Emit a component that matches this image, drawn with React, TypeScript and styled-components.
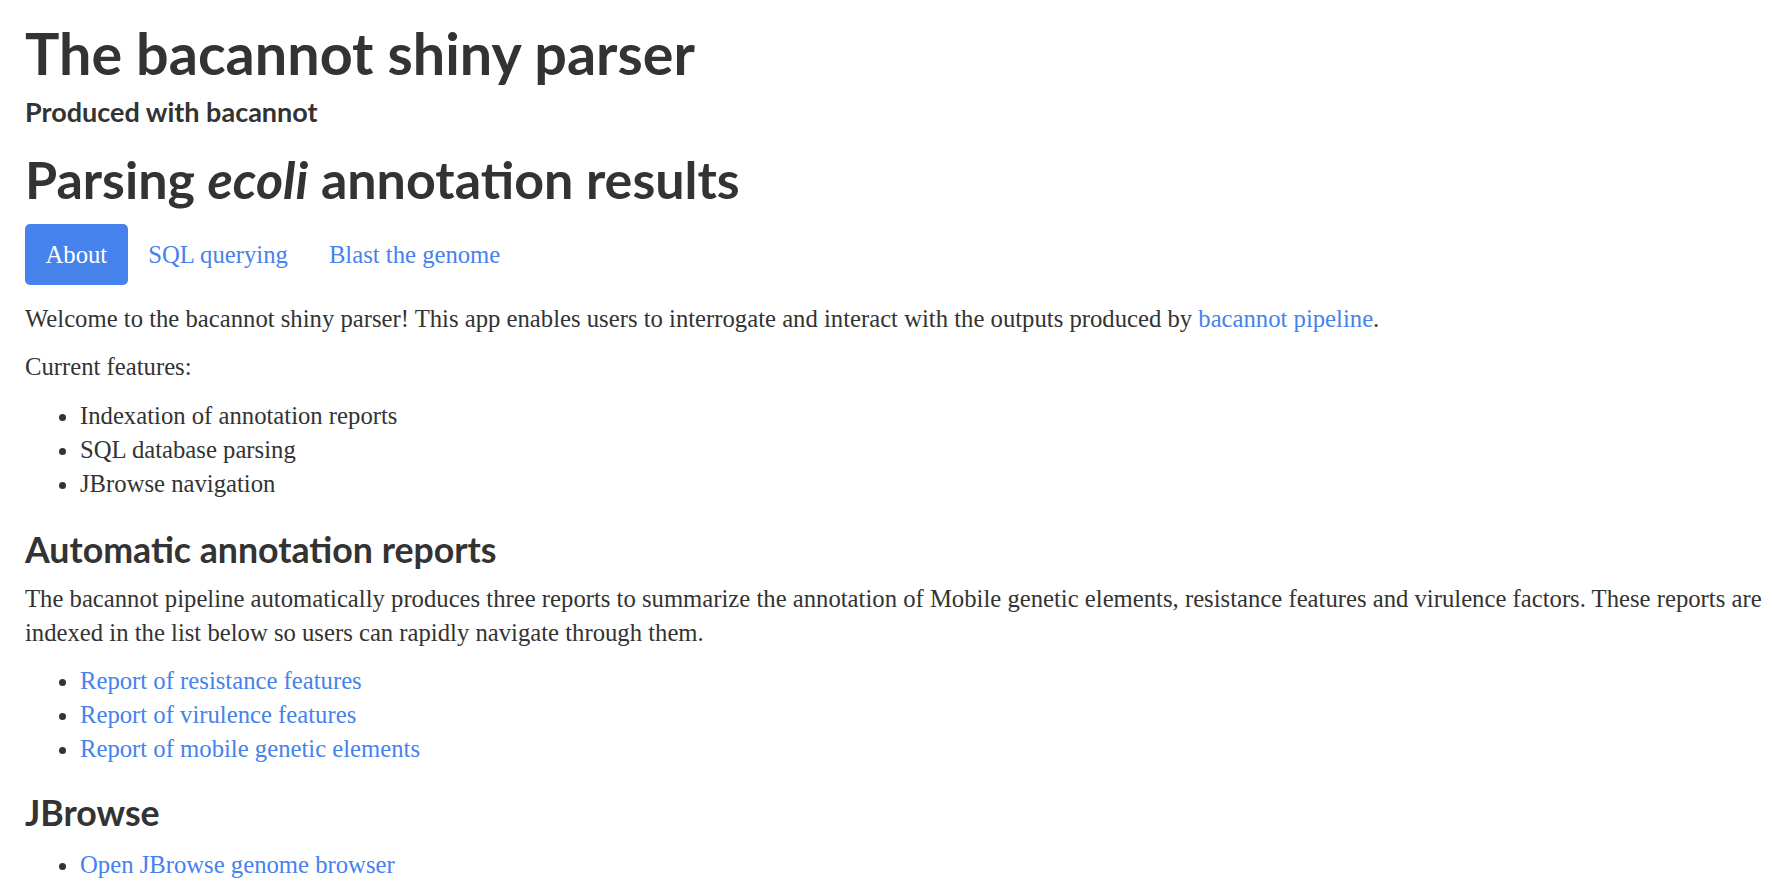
import styled, { createGlobalStyle } from 'styled-components';

const GlobalStyle = createGlobalStyle`
  html, body {
    margin: 0;
    padding: 0;
    background: #ffffff;
  }
  body {
    font-family: "Liberation Serif", Georgia, serif;
    font-size: 24.7px;
    line-height: 34px;
    color: #333333;
  }
`;

const Page = styled.div`
  padding: 18px 2px 20px 25px;
`;

const Heading = styled.h1<{ $size: number; $top?: number; $bottom?: number }>`
  font-family: Lato, "Liberation Sans", sans-serif;
  font-weight: 700;
  font-size: ${(p) => p.$size}px;
  line-height: 1.2;
  color: #333333;
  margin: ${(p) => p.$top ?? 0}px 0 ${(p) => p.$bottom ?? 0}px;

  em {
    font-style: italic;
  }
`;

const Pills = styled.nav`
  display: flex;
  align-items: center;
  margin: 13px 0 17px;
`;

const Pill = styled.a<{ $active?: boolean }>`
  display: block;
  padding: 13px 20.5px;
  border-radius: 5px;
  line-height: 35px;
  text-decoration: none;
  color: ${(p) => (p.$active ? '#ffffff' : '#4582ec')};
  background: ${(p) => (p.$active ? '#4582ec' : 'transparent')};
  cursor: pointer;
`;

const Paragraph = styled.p<{ $bottom?: number }>`
  margin: 0 0 ${(p) => p.$bottom ?? 14}px;
`;

const List = styled.ul`
  margin: 0 0 15px;
  padding-left: 55px;
`;

const Link = styled.a`
  color: #4582ec;
  text-decoration: none;
`;

export default function App() {
  return (
    <>
      <GlobalStyle />
      <Page>
        <Heading as="h1" $size={57.5} $bottom={9}>
          The bacannot shiny parser
        </Heading>
        <Heading as="h4" $size={27} $bottom={20}>
          Produced with bacannot
        </Heading>
        <Heading as="h2" $size={52}>
          Parsing <em>ecoli</em> annotation results
        </Heading>

        <Pills>
          <Pill $active>About</Pill>
          <Pill>SQL querying</Pill>
          <Pill>Blast the genome</Pill>
        </Pills>

        <Paragraph>
          Welcome to the bacannot shiny parser! This app enables users to interrogate and interact with the outputs
          produced by <Link href="#">bacannot pipeline</Link>.
        </Paragraph>
        <Paragraph $bottom={15}>Current features:</Paragraph>
        <List>
          <li>Indexation of annotation reports</li>
          <li>SQL database parsing</li>
          <li>JBrowse navigation</li>
        </List>

        <Heading as="h3" $size={35.7} $top={28} $bottom={10}>
          Automatic annotation reports
        </Heading>
        <Paragraph>
          The bacannot pipeline automatically produces three reports to summarize the annotation of Mobile genetic
          elements, resistance features and virulence factors. These reports are indexed in the list below so users can
          rapidly navigate through them.
        </Paragraph>
        <List>
          <li>
            <Link href="#">Report of resistance features</Link>
          </li>
          <li>
            <Link href="#">Report of virulence features</Link>
          </li>
          <li>
            <Link href="#">Report of mobile genetic elements</Link>
          </li>
        </List>

        <Heading as="h3" $size={35.7} $top={26} $bottom={14}>
          JBrowse
        </Heading>
        <List>
          <li>
            <Link href="#">Open JBrowse genome browser</Link>
          </li>
        </List>
      </Page>
    </>
  );
}
